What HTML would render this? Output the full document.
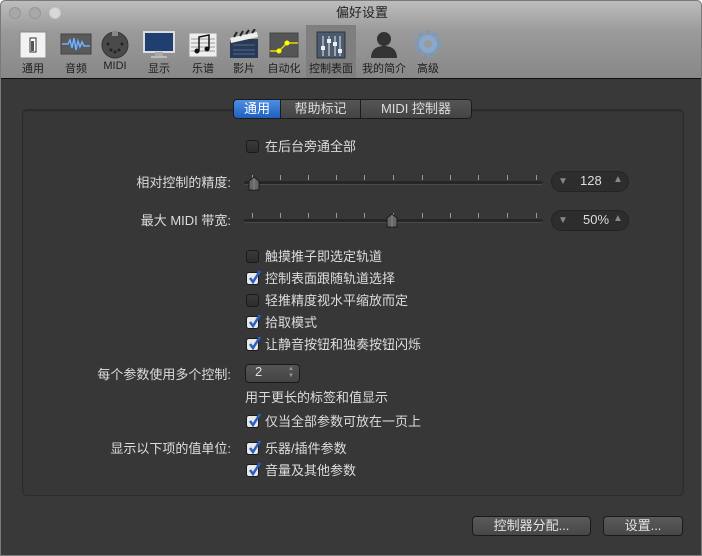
<!DOCTYPE html>
<html><head><meta charset="utf-8"><style>
*{margin:0;padding:0;box-sizing:border-box}
body{width:702px;height:556px;background:#fff;font-family:"Liberation Sans","Noto Sans CJK SC",sans-serif;overflow:hidden;position:relative}
.win{position:absolute;left:0;top:0;width:702px;height:556px;background:#393939;border:1px solid #7a7a7a;border-radius:5px 5px 0 0;overflow:hidden}
.tb{position:absolute;left:0;top:0;width:700px;height:78px;background:linear-gradient(#bdbdbd,#9a9a9a 40%,#888);border-bottom:1px solid #111}
.dot{position:absolute;top:6px;width:12px;height:12px;border-radius:50%;background:#a8a8a8;border:1px solid #959595}
.title{position:absolute;left:0;width:700px;top:1px;text-align:center;font-size:13px;color:#222;padding-left:22px}
.it{position:absolute;top:24px;width:50px;height:53px;text-align:center;font-size:11px;color:#1e1e1e}
.it .ic{position:absolute;left:50%;top:4px;transform:translateX(-50%)}
.it span{position:absolute;left:0;right:0;top:35px}
.sel{background:#7f7f7f}
.panel{position:absolute;left:21px;top:108px;width:662px;height:387px;background:#373737;border:1px solid #2b2b2b;border-radius:5px;box-shadow:inset 0 1px 1px #2a2a2a}
.tabs{position:absolute;left:232px;top:98px;height:20px;display:flex;border:1px solid #1b1b1b;border-radius:4px;overflow:hidden;font-size:13px;color:#ddd}
.tabs div{height:18px;line-height:17px;text-align:center;background:linear-gradient(#555,#444);border-right:1px solid #1b1b1b}
.tabs .a{background:linear-gradient(#4f8fe0,#1f5fbf);color:#fff}
.t{position:absolute;font-size:13px;color:#ddd;white-space:nowrap;margin-top:-2px}
.r{text-align:right}
.cb{position:absolute;width:13px;height:13px;border-radius:3px;background:linear-gradient(#3a3a3a,#2c2c2c);border:1px solid #1a1a1a}
.ck{background:#e9e9e9}
.ck svg{position:absolute;left:0;top:-3px}
.track{position:absolute;left:243px;width:299px;height:4px;border-radius:2px;background:#262626;border-bottom:1px solid #4a4a4a}
.tick{position:absolute;width:1px;height:5px;background:#999}
.thumb{position:absolute;width:12px;height:15px}
.val{position:absolute;left:550px;width:78px;height:21px;border-radius:11px;background:#2d2d2d;border:1px solid #242424;font-size:13px;color:#ddd}
.btn{position:absolute;top:515px;height:20px;border-radius:4px;border:1px solid #1a1a1a;background:linear-gradient(#5a5a5a,#474747);font-size:13px;color:#e2e2e2;text-align:center;line-height:17px}
</style></head><body><div class="win">
<div class="tb">
<div class="dot" style="left:8px"></div><div class="dot" style="left:28px"></div><div class="dot" style="left:48px;background:#d8d8d8;border-color:#c8c8c8"></div>
<div class="title">偏好设置</div>
<div class="it" style="left:7px"><svg class="ic" width="30" height="30"><rect x="2" y="3" width="26" height="26" fill="#f2f2f2" stroke="#888"/><rect x="12" y="9" width="6" height="14" fill="#fff" stroke="#333"/><rect x="13" y="12" width="3" height="10" fill="#555"/></svg><span>通用</span></div>
<div class="it" style="left:50px"><svg class="ic" width="32" height="30"><rect x="1" y="5" width="30" height="20" fill="#5a5a5a" stroke="#444"/><path d="M2 15h6l2-4 2 8 2-10 2 12 2-9 2 6 2-5 2 4h6" stroke="#6fb0ff" fill="none" stroke-width="1.5"/></svg><span>音频</span></div>
<div class="it" style="left:89px"><svg class="ic" width="30" height="30"><circle cx="15" cy="16" r="13" fill="#4a4a4a" stroke="#333"/><rect x="12" y="2" width="6" height="5" fill="#888"/><circle cx="8" cy="15" r="1.5" fill="#222"/><circle cx="22" cy="15" r="1.5" fill="#222"/><circle cx="11" cy="21" r="1.5" fill="#222"/><circle cx="19" cy="21" r="1.5" fill="#222"/><circle cx="15" cy="23" r="1.5" fill="#222"/></svg><span>MIDI</span></div>
<div class="it" style="left:133px"><svg class="ic" width="32" height="30"><rect x="1" y="3" width="30" height="20" fill="#1f3f70" stroke="#ddd" stroke-width="2"/><rect x="12" y="23" width="8" height="4" fill="#aaa"/><rect x="8" y="27" width="16" height="2" fill="#bbb"/></svg><span>显示</span></div>
<div class="it" style="left:177px"><svg class="ic" width="30" height="30"><rect x="1" y="4" width="28" height="24" fill="#eee" stroke="#999"/><path d="M3 10h24M3 14h24M3 18h24M3 22h24" stroke="#999"/><path d="M11 22V8l10-2v14" stroke="#111" fill="none" stroke-width="1.5"/><circle cx="9" cy="22" r="2.5" fill="#111"/><circle cx="19" cy="20" r="2.5" fill="#111"/></svg><span>乐谱</span></div>
<div class="it" style="left:218px"><svg class="ic" width="30" height="30"><rect x="1" y="10" width="28" height="19" fill="#2a3a55"/><path d="M1 9L28 3l1 5L2 14z" fill="#eee"/><path d="M5 8l3-5M11 7l3-5M17 5l3-4M23 4l3-4" stroke="#222" stroke-width="2"/><path d="M4 16h22M4 21h22M4 25h22" stroke="#4a6a9a"/></svg><span>影片</span></div>
<div class="it" style="left:258px"><svg class="ic" width="30" height="30"><rect x="1" y="4" width="28" height="24" fill="#555" stroke="#444"/><path d="M1 22h9l8-8h11" stroke="#e8d800" fill="none" stroke-width="1.5"/><circle cx="10" cy="22" r="2.5" fill="#ff0"/><circle cx="18" cy="14" r="2.5" fill="#ff0"/></svg><span>自动化</span></div>
<div class="it sel" style="left:305px"><svg class="ic" width="30" height="30"><rect x="1" y="3" width="28" height="26" fill="#4a5a70" stroke="#333"/><path d="M7 7v20M13 7v20M19 7v20M24 7v20" stroke="#eee"/><rect x="5" y="17" width="4" height="4" fill="#eee"/><rect x="11" y="10" width="4" height="4" fill="#eee"/><rect x="17" y="13" width="4" height="4" fill="#eee"/><rect x="22" y="20" width="4" height="4" fill="#eee"/></svg><span>控制表面</span></div>
<div class="it" style="left:358px"><svg class="ic" width="30" height="30"><circle cx="15" cy="10" r="7" fill="#333"/><path d="M2 29c0-9 6-12 13-12s13 3 13 12z" fill="#333"/></svg><span>我的简介</span></div>
<div class="it" style="left:402px"><svg class="ic" width="30" height="30"><circle cx="15" cy="15" r="11" fill="none" stroke="#7a9ac0" stroke-width="5" stroke-dasharray="4 3"/><circle cx="15" cy="15" r="9" fill="#8aa8cc"/><circle cx="15" cy="15" r="4" fill="#9a9a9a"/></svg><span>高级</span></div>
</div>
<div class="panel"></div>
<div class="tabs"><div class="a" style="width:47px">通用</div><div style="width:80px">帮助标记</div><div style="width:110px;border-right:0">MIDI 控制器</div></div>

<div class="cb" style="left:245px;top:139px"></div><div class="t" style="left:264px;top:137px">在后台旁通全部</div>

<div class="t r" style="left:60px;width:170px;top:173px">相对控制的精度:</div>
<div class="track" style="top:180px"></div>
<div class="t r" style="left:60px;width:170px;top:211px">最大 MIDI 带宽:</div>
<div class="track" style="top:218px"></div>
<div id="ticks"></div>
<svg class="thumb" style="left:247px;top:175px" viewBox="0 0 12 15"><path d="M1 5L6 1l5 4v9H1z" fill="#666" stroke="#1a1a1a"/><path d="M6 2v12" stroke="#888"/></svg>
<svg class="thumb" style="left:385px;top:212px" viewBox="0 0 12 15"><path d="M1 5L6 1l5 4v9H1z" fill="#666" stroke="#1a1a1a"/><path d="M6 2v12" stroke="#888"/></svg>
<div class="val" style="top:170px"><span style="position:absolute;left:6px;top:4px;color:#888;font-size:10px">▼</span><span style="position:absolute;left:28px;top:1px">128</span><span style="position:absolute;left:61px;top:2px;color:#888;font-size:10px">▲</span></div>
<div class="val" style="top:209px"><span style="position:absolute;left:6px;top:4px;color:#888;font-size:10px">▼</span><span style="position:absolute;left:31px;top:1px">50%</span><span style="position:absolute;left:61px;top:2px;color:#888;font-size:10px">▲</span></div>

<div class="cb" style="left:245px;top:249px"></div><div class="t" style="left:264px;top:247px">触摸推子即选定轨道</div>
<div class="cb ck" style="left:245px;top:271px"><svg width="16" height="16"><path d="M3 8l3 4 7-11" stroke="#2b5fc0" stroke-width="2.5" fill="none"/></svg></div><div class="t" style="left:264px;top:269px">控制表面跟随轨道选择</div>
<div class="cb" style="left:245px;top:293px"></div><div class="t" style="left:264px;top:291px">轻推精度视水平缩放而定</div>
<div class="cb ck" style="left:245px;top:315px"><svg width="16" height="16"><path d="M3 8l3 4 7-11" stroke="#2b5fc0" stroke-width="2.5" fill="none"/></svg></div><div class="t" style="left:264px;top:313px">拾取模式</div>
<div class="cb ck" style="left:245px;top:337px"><svg width="16" height="16"><path d="M3 8l3 4 7-11" stroke="#2b5fc0" stroke-width="2.5" fill="none"/></svg></div><div class="t" style="left:264px;top:335px">让静音按钮和独奏按钮闪烁</div>

<div class="t r" style="left:40px;width:190px;top:365px">每个参数使用多个控制:</div>
<div style="position:absolute;left:244px;top:363px;width:55px;height:19px;border-radius:4px;border:1px solid #1a1a1a;background:linear-gradient(#555,#444)"><span class="t" style="left:9px;top:1px">2</span><span style="position:absolute;left:42px;top:1px;font-size:6px;color:#999;line-height:7px">▲<br>▼</span></div>
<div class="t" style="left:244px;top:388px">用于更长的标签和值显示</div>
<div class="cb ck" style="left:245px;top:414px"><svg width="16" height="16"><path d="M3 8l3 4 7-11" stroke="#2b5fc0" stroke-width="2.5" fill="none"/></svg></div><div class="t" style="left:264px;top:412px">仅当全部参数可放在一页上</div>
<div class="t r" style="left:40px;width:190px;top:439px">显示以下项的值单位:</div>
<div class="cb ck" style="left:245px;top:441px"><svg width="16" height="16"><path d="M3 8l3 4 7-11" stroke="#2b5fc0" stroke-width="2.5" fill="none"/></svg></div><div class="t" style="left:264px;top:439px">乐器/插件参数</div>
<div class="cb ck" style="left:245px;top:463px"><svg width="16" height="16"><path d="M3 8l3 4 7-11" stroke="#2b5fc0" stroke-width="2.5" fill="none"/></svg></div><div class="t" style="left:264px;top:461px">音量及其他参数</div>

<div class="btn" style="left:471px;width:119px">控制器分配...</div>
<div class="btn" style="left:602px;width:80px">设置...</div>
</div>
<script>
var h='';[251,279,307,335,363,392,421,449,477,506,535].forEach(function(x){h+='<div class="tick" style="left:'+x+'px;top:174px"></div><div class="tick" style="left:'+x+'px;top:212px"></div>'});document.getElementById('ticks').innerHTML=h;
</script>
</body></html>
